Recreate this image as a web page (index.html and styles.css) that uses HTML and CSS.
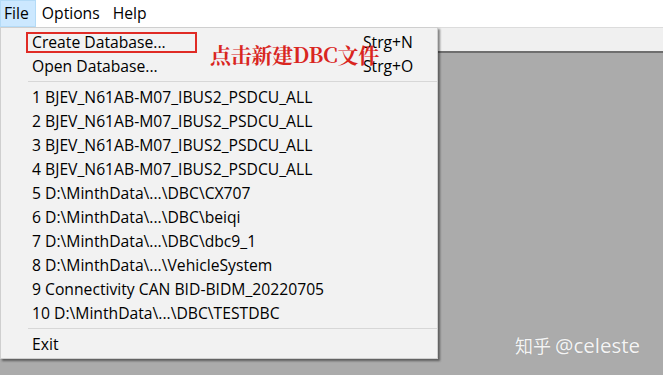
FILE: index.html
```html
<!DOCTYPE html>
<html lang="en">
<head>
<meta charset="utf-8">
<title>File menu</title>
<link rel="stylesheet" href="styles.css">
</head>
<body>
<div class="app">
  <nav class="menubar">
    <span class="mb-item open">File</span>
    <span class="mb-item">Options</span>
    <span class="mb-item">Help</span>
  </nav>
  <div class="toolbar"></div>
  <div class="mdi"></div>

  <div class="dropdown">
    <div class="item"><span class="label">Create Database...</span><span class="key">Strg+N</span></div>
    <div class="item"><span class="label">Open Database...</span><span class="key">Strg+O</span></div>
    <div class="sep"></div>
    <div class="item"><span class="label">1 BJEV_N61AB-M07_IBUS2_PSDCU_ALL</span></div>
    <div class="item"><span class="label">2 BJEV_N61AB-M07_IBUS2_PSDCU_ALL</span></div>
    <div class="item"><span class="label">3 BJEV_N61AB-M07_IBUS2_PSDCU_ALL</span></div>
    <div class="item"><span class="label">4 BJEV_N61AB-M07_IBUS2_PSDCU_ALL</span></div>
    <div class="item"><span class="label">5 D:\MinthData\...\DBC\CX707</span></div>
    <div class="item"><span class="label">6 D:\MinthData\...\DBC\beiqi</span></div>
    <div class="item"><span class="label">7 D:\MinthData\...\DBC\dbc9_1</span></div>
    <div class="item"><span class="label">8 D:\MinthData\...\VehicleSystem</span></div>
    <div class="item"><span class="label">9 Connectivity CAN BID-BIDM_20220705</span></div>
    <div class="item"><span class="label">10 D:\MinthData\...\DBC\TESTDBC</span></div>
    <div class="sep"></div>
    <div class="item"><span class="label">Exit</span></div>
  </div>

  <div class="highlight-box"></div>
  <div class="annotation">点击新建DBC文件</div>
  <div class="watermark"><span class="wm-cjk">知乎</span> <span class="wm-at">@celeste</span></div>
</div>
</body>
</html>
```

FILE: styles.css
```css
* { box-sizing: border-box; }
html, body {
  margin: 0;
  padding: 0;
}
body {
  width: 663px;
  height: 375px;
  overflow: hidden;
  background: #ababab;
  font-family: "Open Sans", "Noto Sans", sans-serif;
  font-size: 15.7px;
  color: #000;
}
.app {
  position: relative;
  width: 663px;
  height: 375px;
  display: flex;
  flex-direction: column;
}
.menubar {
  height: 27px;
  background: #ffffff;
  display: flex;
  align-items: stretch;
  gap: 2px;
}
.mb-item {
  display: flex;
  align-items: center;
  padding: 0 6px 0 3px;
  border: 1px solid transparent;
  line-height: 1;
}
.mb-item.open {
  background: #cce8ff;
  border-color: #b4dbf7;
}
.toolbar {
  height: 26px;
  background: #f0f0f0;
  border-top: 1px solid #dcdcdc;
  border-bottom: 2px solid #6e6e6e;
}
.mdi {
  flex: 1;
  background: #ababab;
}
.dropdown {
  position: absolute;
  left: 0;
  top: 27px;
  width: 438px;
  padding: 2px 0 2px 0;
  background: #f2f2f2;
  border: 1px solid #cfcfcf;
  box-shadow: 2px 2px 2px rgba(0, 0, 0, 0.45);
}
.item {
  height: 24px;
  display: flex;
  align-items: center;
  padding-left: 31px;
  white-space: nowrap;
}
.label {
  flex: 0 0 331px;
}
.sep {
  height: 7px;
  margin-left: 27px;
  display: flex;
  align-items: center;
}
.sep::before {
  content: "";
  display: block;
  width: 100%;
  height: 1px;
  background: #d7d7d7;
}
.highlight-box {
  position: absolute;
  left: 26px;
  top: 32px;
  width: 171px;
  height: 21px;
  border: 2px solid #e02b25;
}
.annotation {
  position: absolute;
  left: 210px;
  top: 41px;
  font-family: "Noto Serif CJK SC", "Noto Sans CJK SC", serif;
  font-size: 21px;
  font-weight: 700;
  line-height: 26px;
  color: #d9261f;
  letter-spacing: -0.3px;
}
.watermark {
  position: absolute;
  left: 515px;
  top: 332px;
  line-height: 26px;
  color: #f4f4f4;
  text-shadow: 0 0 1px rgba(0, 0, 0, 0.15);
  white-space: nowrap;
}
.wm-cjk {
  font-family: "Noto Sans CJK SC", sans-serif;
  font-size: 18px;
}
.wm-at {
  font-family: "Open Sans", "Noto Sans", sans-serif;
  font-size: 20.5px;
}
```
